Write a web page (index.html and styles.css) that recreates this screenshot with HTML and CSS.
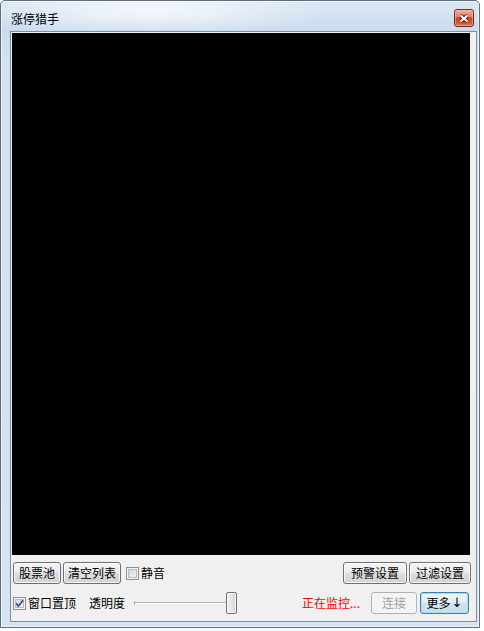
FILE: index.html
```html
<!DOCTYPE html>
<html lang="zh-CN">
<head>
<meta charset="utf-8">
<title>涨停猎手</title>
<link rel="stylesheet" href="styles.css">
</head>
<body>
<div class="window">
  <div class="titlebar">
    <span class="title">涨停猎手</span>
    <button class="close-btn" aria-label="关闭">
      <svg width="10" height="9" viewBox="0 0 10 9">
        <path d="M1.5 1.5 L8.5 7.5 M8.5 1.5 L1.5 7.5" stroke="#5a1a10" stroke-width="3.8" fill="none"/>
        <path d="M1.5 1.5 L8.5 7.5 M8.5 1.5 L1.5 7.5" stroke="#ffffff" stroke-width="2" fill="none"/>
      </svg>
    </button>
  </div>
  <div class="client">
    <div class="list"></div>
    <div class="row row-top">
      <button class="btn w48">股票池</button>
      <button class="btn w58">清空列表</button>
      <label class="check mute"><span class="box"></span><span class="check-text">静音</span></label>
      <div class="spacer"></div>
      <button class="btn w64">预警设置</button>
      <button class="btn w62">过滤设置</button>
    </div>
    <div class="row row-bottom">
      <label class="check"><span class="box"><svg width="11" height="11" viewBox="0 0 11 11"><path d="M2.2 5.4 L4.4 8.2 L9 2.2" stroke="#2c4a9c" stroke-width="1.7" fill="none"/></svg></span><span class="check-text">窗口置顶</span></label>
      <span class="label-opacity">透明度</span>
      <div class="slider"><span class="thumb"></span></div>
      <div class="spacer"></div>
      <span class="status">正在监控...</span>
      <button class="btn disabled w46">连接</button>
      <button class="btn default w49">更多<span class="arrow">↓</span></button>
    </div>
  </div>
</div>
</body>
</html>
```

FILE: styles.css
```css
html, body {
  margin: 0;
  padding: 0;
  background: #ffffff;
}

body {
  width: 484px;
  height: 631px;
  overflow: hidden;
  font-family: "Noto Sans CJK SC", "Noto Sans", sans-serif;
  font-size: 12px;
  color: #000;
}

.window {
  box-sizing: border-box;
  width: 480px;
  height: 628px;
  border: 1px solid #5f6f82;
  border-radius: 5px 5px 0 0;
  padding: 0 2px 5px 9px;
  display: flex;
  flex-direction: column;
  background:
    radial-gradient(ellipse 180px 26px at 150px 10px, rgba(255,255,255,0.75), rgba(255,255,255,0) 100%),
    linear-gradient(to bottom, #dbe7f4 0px, #cbdbee 30px, #d3e1f1 60px, #d6e3f2 100%);
  box-shadow: inset 0 0 0 1px rgba(255,255,255,0.55);
}

.titlebar {
  height: 30px;
  flex: none;
  display: flex;
  align-items: flex-start;
  justify-content: space-between;
}

.title {
  padding: 11px 0 0 1px;
  font-size: 12px;
  line-height: 14px;
  color: #000;
}

.close-btn {
  margin: 8px 3px 0 0;
  width: 20px;
  height: 18px;
  box-sizing: border-box;
  padding: 0;
  border: 1px solid #6e2a1c;
  border-radius: 3px;
  display: flex;
  align-items: center;
  justify-content: center;
  background: linear-gradient(to bottom, #eeae98 0%, #e07f60 42%, #cc4520 50%, #d4532c 80%, #e6805a 100%);
  box-shadow: inset 0 0 0 1px rgba(255,220,200,0.45);
}

.close-btn svg {
  display: block;
}

.client {
  flex: 1;
  border: 1px solid #7d8ea3;
  background: #f0f0f0;
  display: flex;
  flex-direction: column;
}

.list {
  margin: 1px 0 0 1px;
  width: 458px;
  height: 522px;
  flex: none;
  background: #000000;
}

.row {
  height: 22px;
  flex: none;
  display: flex;
  align-items: center;
  padding: 0 5px 0 2px;
}

.row-top {
  margin-top: 7px;
}

.row-bottom {
  margin-top: 8px;
  padding-right: 7px;
}

.spacer {
  flex: 1;
}

.btn {
  height: 22px;
  box-sizing: border-box;
  padding: 0;
  border: 1px solid #707070;
  border-radius: 3px;
  background: linear-gradient(to bottom, #f4f4f4 0%, #ececec 45%, #dedede 52%, #d2d2d2 100%);
  box-shadow: inset 0 0 0 1px rgba(255,255,255,0.8);
  font-family: "Noto Sans CJK SC", "Noto Sans", sans-serif;
  font-size: 12px;
  line-height: 14px;
  color: #000;
  display: flex;
  align-items: center;
  justify-content: center;
  flex: none;
}

.w48 { width: 48px; }
.w58 { width: 58px; margin-left: 2px; }
.w64 { width: 64px; }
.w62 { width: 62px; margin-left: 2px; }
.w46 { width: 46px; margin-left: 11px; }
.w49 { width: 49px; margin-left: 3px; }

.btn.disabled {
  border-color: #adb2b5;
  background: #f4f4f4;
  box-shadow: none;
  color: #a0a0a0;
}

.btn.default {
  border-color: #3c7fb1;
  background: linear-gradient(to bottom, #eef5fa 0%, #e2edf5 45%, #d3e3ee 52%, #c8dbe9 100%);
  box-shadow: inset 0 0 0 1px #a9dcf5;
}

.arrow {
  font-family: "DejaVu Sans", "Liberation Sans", sans-serif;
  font-size: 13px;
  line-height: 14px;
  margin-left: 1px;
}

.check {
  display: flex;
  align-items: center;
  flex: none;
}

.check.mute {
  margin-left: 5px;
}

.box {
  width: 13px;
  height: 13px;
  box-sizing: border-box;
  border: 1px solid #8e8f8f;
  background: linear-gradient(135deg, #c9cdd2 0%, #e6e7e9 55%, #f8f8f8 100%);
  box-shadow: inset 0 0 0 1px #f4f4f4, inset 0 0 0 2px #b9bdc2;
  display: flex;
  flex: none;
}

.box svg {
  display: block;
}

.check-text {
  margin-left: 2px;
  line-height: 14px;
}

.label-opacity {
  margin-left: 13px;
  line-height: 14px;
  flex: none;
}

.slider {
  margin-left: 9px;
  width: 103px;
  height: 22px;
  flex: none;
  display: flex;
  justify-content: flex-end;
  background:
    linear-gradient(#a9a9a9, #a9a9a9) no-repeat 0 9px / 1px 4px,
    linear-gradient(#b4b4b4, #b4b4b4) no-repeat 0 10px / 100% 1px,
    linear-gradient(#ffffff, #ffffff) no-repeat 0 11px / 100% 1px;
}

.thumb {
  width: 11px;
  height: 22px;
  box-sizing: border-box;
  border: 1px solid #707070;
  border-radius: 2px;
  background: linear-gradient(to right, #f3f3f3 0%, #e6e6e6 50%, #d4d4d4 100%);
  box-shadow: inset 0 0 0 1px rgba(255,255,255,0.8);
}

.status {
  color: #ff0000;
  line-height: 14px;
  flex: none;
}
```
